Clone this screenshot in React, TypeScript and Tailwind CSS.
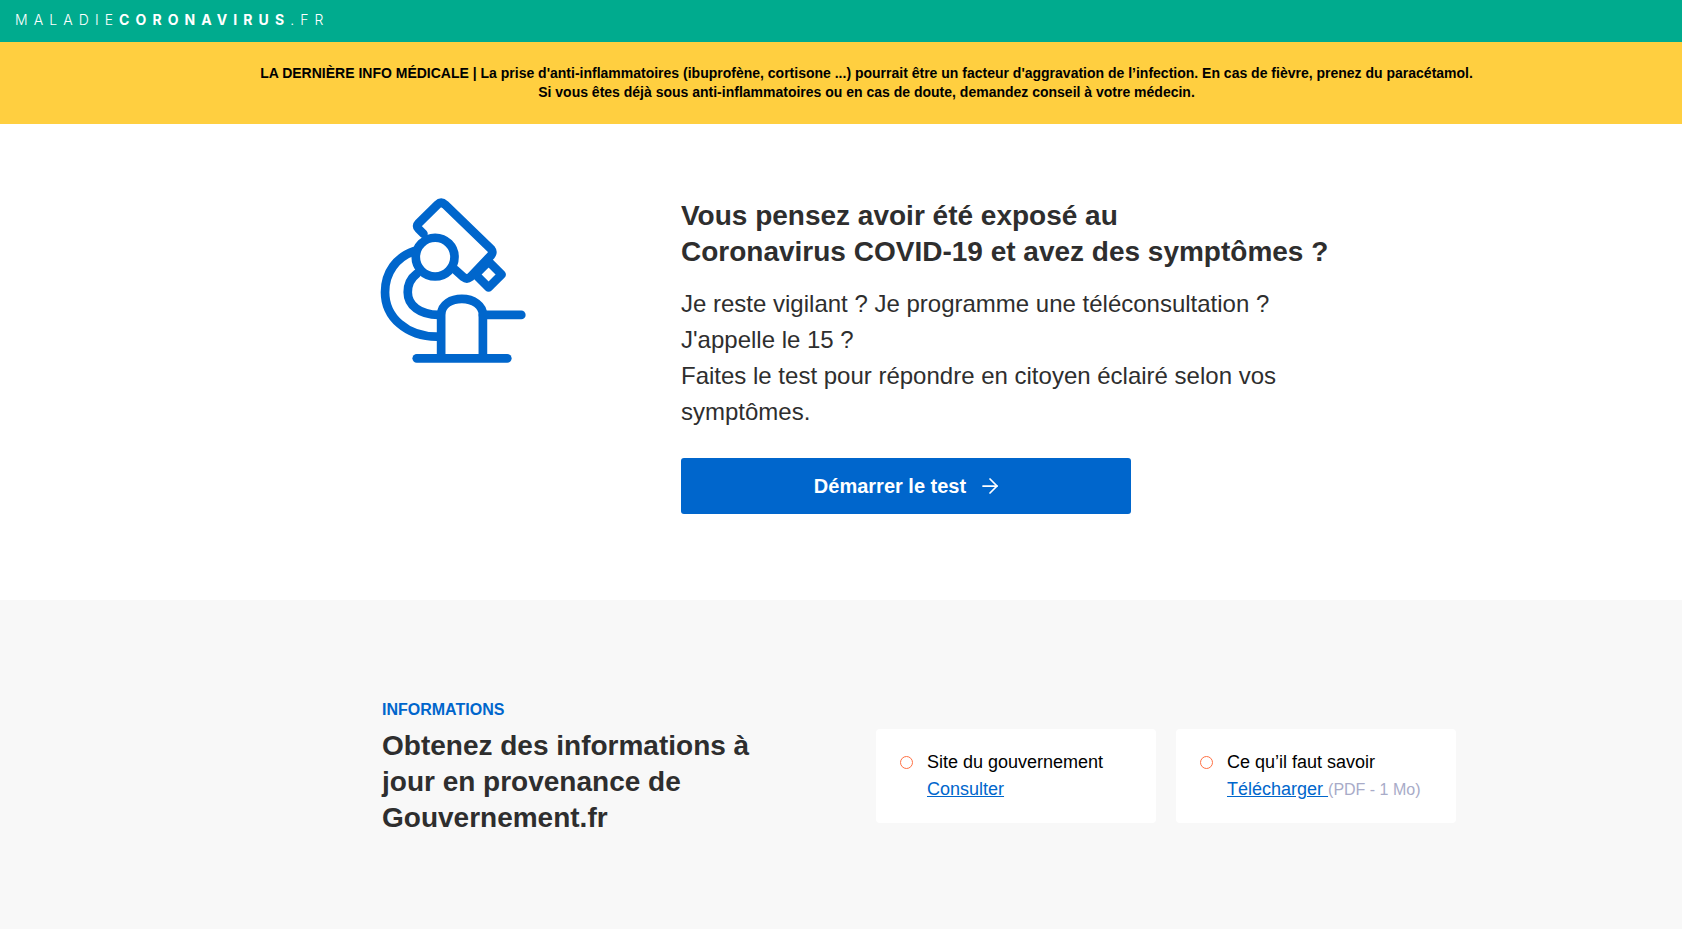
import { ArrowRight } from "lucide-react";

const sans = "font-['Liberation_Sans',Arial,sans-serif]";

function Microscope() {
  return (
    <svg
      viewBox="60 50 440 500"
      className="w-[147px] h-[167px] text-[#0066cc]"
      fill="none"
      stroke="currentColor"
      strokeWidth="26"
      strokeLinecap="round"
      strokeLinejoin="round"
    >
      <path d="M190 160 L175 145 Q167 137 175 129 L232 73 Q243 62 255 73 L392 205 Q400 215 392 225 L330 290 Q320 298 310 290 L285 268" />
      <circle cx="225" cy="230" r="58" />
      <path d="M385 243 L424 282 L385 321 L346 282 Z" />
      <path d="M162 212 C110 230 75 275 75 335 C75 410 140 468 230 468" />
      <path d="M170 280 C150 295 143 315 143 335 C143 375 180 403 235 403" />
      <path d="M243 530 V403 C243 370 275 355 305 355 C340 355 368 375 368 403 V530" />
      <path d="M368 403 H483" />
      <path d="M170 533 H441" />
    </svg>
  );
}

function InfoCard({ title, link, note }: { title: string; link: string; note?: string }) {
  return (
    <div className="w-[280px] h-[94px] bg-white rounded flex pl-6 pt-[20px]">
      <span className="w-[13px] h-[13px] mt-[7px] mr-[14px] rounded-full border border-[#ff7043] shrink-0" />
      <div className="text-[18px] leading-[27px] text-black">
        <p>{title}</p>
        <p>
          <a className="text-[#0066cc] underline">{link}</a>
          {note && <span className="text-[16px] text-[#a8abc8]">{note}</span>}
        </p>
      </div>
    </div>
  );
}

export default function App() {
  return (
    <div className={`min-h-[929px] flex flex-col bg-white text-[#2e2e2e] ${sans}`}>
      {/* Top bar */}
      <header className="h-[42px] bg-[#00ab8e] flex items-center pl-[15px] pb-[4px] text-white text-[14px] tracking-[0.435em] font-['Inter',sans-serif]">
        <span className="font-light">MALADIE</span>
        <span className="font-bold">CORONAVIRUS</span>
        <span className="font-light">.FR</span>
      </header>

      {/* Alert banner */}
      <div className="h-[82px] bg-[#ffcf40] pt-[22px] pl-[51px] text-center text-[14px] leading-[19px] font-bold text-black">
        <p>
          LA DERNIÈRE INFO MÉDICALE | La prise d'anti-inflammatoires (ibuprofène, cortisone ...) pourrait être un facteur
          d'aggravation de l’infection. En cas de fièvre, prenez du paracétamol.
        </p>
        <p>Si vous êtes déjà sous anti-inflammatoires ou en cas de doute, demandez conseil à votre médecin.</p>
      </div>

      {/* Hero */}
      <section className="h-[476px] flex pl-[380px] pt-[73px]">
        <div className="w-[301px] shrink-0">
          <Microscope />
        </div>
        <div className="w-[640px] pt-[1px]">
          <h1 className="text-[28px] leading-[36px] font-bold whitespace-nowrap">
            Vous pensez avoir été exposé au
            <br />
            Coronavirus COVID-19 et avez des symptômes ?
          </h1>
          <p className="mt-[16px] text-[24px] leading-[36px]">
            Je reste vigilant ? Je programme une téléconsultation ?
            <br />
            J'appelle le 15 ?
            <br />
            Faites le test pour répondre en citoyen éclairé selon vos symptômes.
          </p>
          <button className="mt-[28px] w-[450px] h-[56px] pl-[4px] bg-[#0066cc] rounded-[3px] text-white text-[20px] font-bold flex items-center justify-center gap-[12px]">
            Démarrer le test
            <ArrowRight size={24} strokeWidth={1.75} />
          </button>
        </div>
      </section>

      {/* Informations */}
      <section className="flex-1 bg-[#f8f8f8] flex pl-[382px] pt-[100px]">
        <div className="w-[494px] shrink-0">
          <p className="text-[16px] leading-[19px] font-bold text-[#0066cc]">INFORMATIONS</p>
          <h2 className="mt-[9px] w-[400px] text-[28px] leading-[36px] font-bold">
            Obtenez des informations à jour en provenance de Gouvernement.fr
          </h2>
        </div>
        <div className="flex gap-5 pt-[29px]">
          <InfoCard title="Site du gouvernement" link="Consulter" />
          <InfoCard title="Ce qu’il faut savoir" link="Télécharger " note="(PDF - 1 Mo)" />
        </div>
      </section>
    </div>
  );
}
